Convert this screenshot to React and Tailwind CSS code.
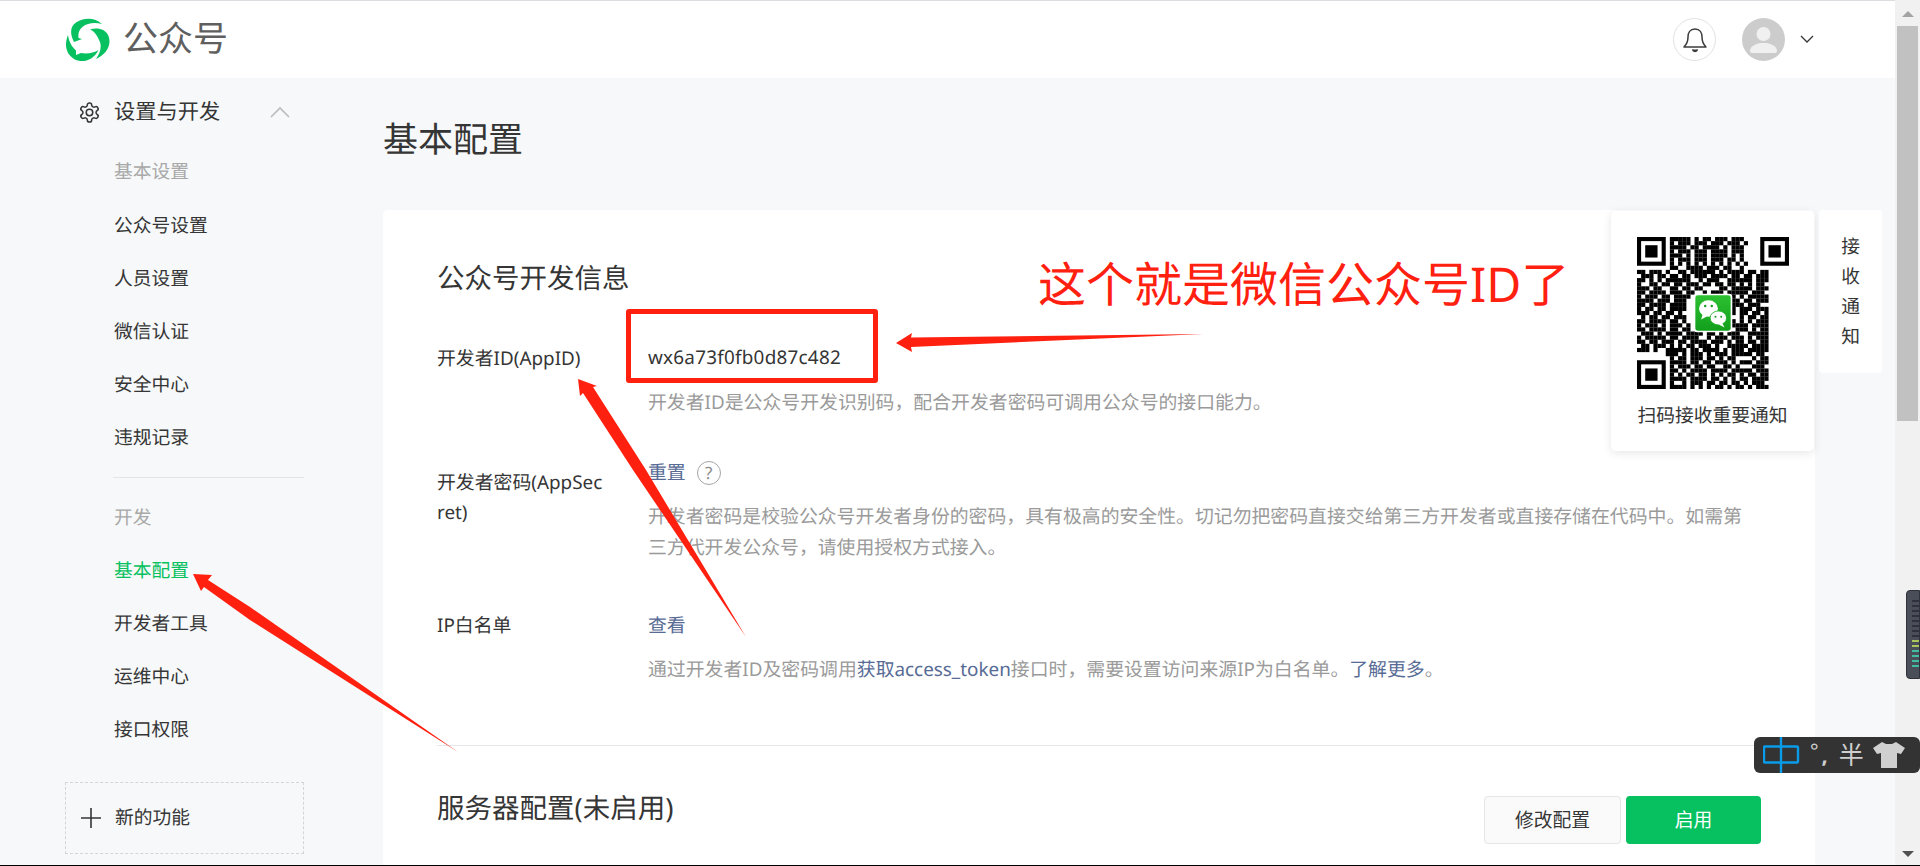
import React from "react";

const font = { fontFamily: '"Noto Sans", "Noto Sans CJK SC", sans-serif' };

const qrRows = [
  "..... ...## ###.# .##.# ##.## #.... ..",
  "..... ...#. ###.# ##.## #.### .#... ..",
  "..... ...## ##.## .#### .#.## #.... ..",
  "..... ...#. ###.# ##.## ##.## #.... ..",
  "..... ...## #.#.# ##.## ##.#. #.... ..",
  "..... ...#. ###.# ##.## #.##. #.... ..",
  "..... ...#. #.#.# .#.#. #.#.# .#... ..",
  "..... ...## ..### #.### .##.. #.... ..",
  "##.## #.#.. ##.## ####. #.### #.##. ##",
  ".###. ##.## .##.# ##.## ##.## .##.# ##",
  "##.#. #.### ###.. #.### ..### ###.# ##",
  "#..## .##.# #.### .##.# #.##. #.#.# #.",
  "###.# #..## .##.# #.... ##.## ###.# ##",
  "##.## ##.## #.##. .#.## #.### ##.## #.",
  "#.### .##.# ###.. ....# #.##. #.### ##",
  "####. ###.# ##... ..... .#.## .##.# ##",
  "##.## ##.## ##... ..... ##.## #.### ..",
  "#.##. ##.## ##... ..... ####. ###.# ##",
  "###.# #.##. #.... ..... ##.#. ##.## .#",
  ".#.## .##.# ##... ..... ###.. #.##. ##",
  "##.## ##.## .#... ..... .###. #.#.# ##",
  "#.### .#.## #.#.. ...#. ##.## ##.## ##",
  "##.## ##.## .##.# #.#.# ###.# ##.#. ##",
  ".###. #.### #.### #.##. #.### ..### ##",
  "#.### ##.## .#### ..#.# ##.## #.#.# ##",
  "##.## .###. ##.## ##.## #.#.# #.##. ##",
  ".##.# ##.#. #.##. ###.# ..### ##.## ##",
  "###.# ..### ##.## .#### .#.## #.### ##",
  "..... ..### .#.## #.#.# ##.## ###.# #.",
  "..... ...#. ##.## #.##. #.##. ...#. ##",
  "..... ...## ##.## .##.# ##.#. ###.# ##",
  "..... ...#. ###.# #.##. .##.# ...## #.",
  "..... ...## .#.## ##.## ##.## ###.# ##",
  "..... ...#. #.##. ##.#. #.##. #.##. ##",
  "..... ...## ##.## ##.## .#.#. ##.## ##",
  "..... ...#. .#.## #.##. ##.## .#.## #.",
  "..... ...## ##.#. #.#.# #.#.# #.#.# ##",
];

function QrCode() {
  const finder = (x, y) => (
    <g key={`${x}-${y}`}>
      <rect x={x} y={y} width="7" height="7" fill="#000" />
      <rect x={x + 1} y={y + 1} width="5" height="5" fill="#fff" />
      <rect x={x + 2} y={y + 2} width="3" height="3" fill="#000" />
    </g>
  );
  return (
    <svg width="152" height="152" viewBox="0 0 37 37" className="block">
      {qrRows.map((row, y) =>
        row.replace(/\s/g, "").split("").map((c, x) =>
          c === "#" ? <rect key={`${x}-${y}`} x={x} y={y} width="1.02" height="1.02" fill="#000" /> : null
        )
      )}
      {finder(0, 0)}
      {finder(30, 0)}
      {finder(0, 30)}
      <defs>
        <linearGradient id="wxg" x1="0" y1="0" x2="0" y2="1">
          <stop offset="0" stopColor="#2dc131" />
          <stop offset="1" stopColor="#129f1d" />
        </linearGradient>
      </defs>
      <rect x="13.8" y="13.8" width="9.4" height="9.4" rx="0.8" fill="#fff" />
      <rect x="14.2" y="14.2" width="8.6" height="8.6" rx="0.6" fill="url(#wxg)" />
      <ellipse cx="17.4" cy="17.4" rx="2.3" ry="2" fill="#fff" />
      <path d="M16 18.8l-.4 1.3 1.5-.8z" fill="#fff" />
      <ellipse cx="19.8" cy="19.7" rx="2" ry="1.7" fill="#fff" stroke="#1fb027" strokeWidth="0.2" />
      <path d="M20.8 21l.5 1-1.4-.7z" fill="#fff" />
      <circle cx="16.6" cy="16.8" r="0.3" fill="#1a9f22" />
      <circle cx="18.2" cy="16.8" r="0.3" fill="#1a9f22" />
      <circle cx="19.1" cy="19.4" r="0.25" fill="#1a9f22" />
      <circle cx="20.5" cy="19.4" r="0.25" fill="#1a9f22" />
    </svg>
  );
}

function Logo() {
  return (
    <svg width="45" height="44" viewBox="0 0 45 44" className="block shrink-0" fill="#07c160">
      <path d="M9 24C4 14 6 8 11 4.500 18-.5 30-1 37 6c-7-2-15-1-19 2.500-4 3-5 6.500-4.500 11.500l3.500 1z" />
      <path d="M25 11.500c7-2.500 16-.5 18.500 6.500 3.500 9-2.500 19-12.500 23 5-7 6-14 3-19-2-5-5-9-9-10.500z" />
      <path d="M3 17c-4 10-2 19 6 24 8 4.500 19 2 24.500-9-4.500 3-11.500 4-17.500 3l-5 2v-4.500C7 29 4 24 3 17z" />
    </svg>
  );
}

function SideItem({ children, muted, active }) {
  return (
    <div className={`h-[53.1px] flex items-center pl-[114px] text-[18.75px] ${muted ? "text-[#a8a8a8]" : active ? "text-[#07c160]" : "text-[#353535]"}`}>
      {children}
    </div>
  );
}

function Sidebar() {
  return (
    <aside className="w-[383px] shrink-0">
      <div className="h-[68px] flex items-center pl-[78px]">
        <svg width="23" height="23" viewBox="0 0 24 24" fill="none" stroke="#353535" strokeWidth="1.6" strokeLinecap="round" strokeLinejoin="round">
          <path d="M12.22 2h-.44a2 2 0 0 0-2 2v.18a2 2 0 0 1-1 1.73l-.43.25a2 2 0 0 1-2 0l-.15-.08a2 2 0 0 0-2.73.73l-.22.38a2 2 0 0 0 .73 2.73l.15.1a2 2 0 0 1 1 1.72v.51a2 2 0 0 1-1 1.74l-.15.09a2 2 0 0 0-.73 2.73l.22.38a2 2 0 0 0 2.73.73l.15-.08a2 2 0 0 1 2 0l.43.25a2 2 0 0 1 1 1.73V20a2 2 0 0 0 2 2h.44a2 2 0 0 0 2-2v-.18a2 2 0 0 1 1-1.73l.43-.25a2 2 0 0 1 2 0l.15.08a2 2 0 0 0 2.73-.73l.22-.39a2 2 0 0 0-.73-2.73l-.15-.08a2 2 0 0 1-1-1.74v-.5a2 2 0 0 1 1-1.74l.15-.09a2 2 0 0 0 .73-2.73l-.22-.38a2 2 0 0 0-2.73-.73l-.15.08a2 2 0 0 1-2 0l-.43-.25a2 2 0 0 1-1-1.73V4a2 2 0 0 0-2-2z" />
          <circle cx="12" cy="12" r="3.4" />
        </svg>
        <span className="ml-[13px] text-[21.25px] text-[#353535]">设置与开发</span>
        <svg width="20" height="12" viewBox="0 0 20 12" fill="none" stroke="#bcbcbc" strokeWidth="1.6" className="ml-[50px]">
          <path d="M1 11l9-9 9 9" />
        </svg>
      </div>
      <SideItem muted>基本设置</SideItem>
      <SideItem>公众号设置</SideItem>
      <SideItem>人员设置</SideItem>
      <SideItem>微信认证</SideItem>
      <SideItem>安全中心</SideItem>
      <SideItem>违规记录</SideItem>
      <div className="ml-[113px] w-[191px] h-px bg-[#e4e5e7] mt-[12.4px] mb-[13.6px]" />
      <SideItem muted>开发</SideItem>
      <SideItem active>基本配置</SideItem>
      <SideItem>开发者工具</SideItem>
      <SideItem>运维中心</SideItem>
      <SideItem>接口权限</SideItem>
      <div className="ml-[65px] mt-[25px] w-[239px] h-[72px] border-[1.5px] border-dashed border-[#d4d5d7] flex items-center pl-[14px]">
        <svg width="22" height="22" viewBox="0 0 22 22" stroke="#353535" strokeWidth="1.6">
          <path d="M11 1v20M1 11h20" />
        </svg>
        <span className="ml-[13px] text-[18.75px] text-[#353535]">新的功能</span>
      </div>
    </aside>
  );
}

function Row({ label, labelClass = "", children }) {
  return (
    <div className="flex text-[18.88px] leading-[31px]">
      <div className={`w-[211px] shrink-0 text-[#353535] ${labelClass}`}>{label}</div>
      <div className="flex-1">{children}</div>
    </div>
  );
}

function Main() {
  return (
    <main className="flex-1 min-w-0 flex flex-col">
      <h1 className="shrink-0 pt-[38px] h-[132px] text-[35px] leading-[48px] font-normal text-[#353535]">基本配置</h1>
      <section className="flex-1 w-[1432px] bg-white rounded-t-[5px] pl-[54px] pr-[54px] pt-[49px]">
        <h2 className="text-[27.5px] leading-[40px] font-normal text-[#353535] mb-[43px]">公众号开发信息</h2>
        <Row label="开发者ID(AppID)" labelClass="mt-[1px]">
          <div className="text-[#353535] tracking-[0.25px]">wx6a73f0fb0d87c482</div>
          <p className="mt-[14px] text-[#9a9a9a]">开发者ID是公众号开发识别码，配合开发者密码可调用公众号的接口能力。</p>
        </Row>
        <div className="mt-[39px]">
          <Row label={<>开发者密码(AppSec<br />ret)</>} labelClass="mt-[10px] leading-[30px]">
            <div className="flex items-center h-[31px] text-[#576b95]">
              <span>重置</span>
              <span className="ml-[11px] w-[24px] h-[24px] rounded-full border border-[#a5a5a5] flex items-center justify-center text-[#8c8c8c] text-[17px] leading-none">?</span>
            </div>
            <p className="mt-[13px] text-[#9a9a9a]">开发者密码是校验公众号开发者身份的密码，具有极高的安全性。切记勿把密码直接交给第三方开发者或直接存储在代码中。如需第<br />三方代开发公众号，请使用授权方式接入。</p>
          </Row>
        </div>
        <div className="mt-[47px]">
          <Row label="IP白名单">
            <div className="text-[#576b95]">查看</div>
            <p className="mt-[13px] text-[#9a9a9a]">
              通过开发者ID及密码调用<span className="text-[#576b95]">获取access_token</span>接口时，需要设置访问来源IP为白名单。<span className="text-[#576b95]">了解更多</span>。
            </p>
          </Row>
        </div>
        <div className="mt-[60px] h-px bg-[#e7e7eb]" />
        <div className="mt-[50px] flex items-start justify-between">
          <h2 className="text-[27.5px] leading-[40px] mt-[-7px] font-normal text-[#353535]">服务器配置(未启用)</h2>
          <div className="flex gap-[5px]">
            <button className="w-[137px] h-[48px] bg-[#fafafa] border border-[#e5e5e5] rounded-[4px] text-[18.75px] text-[#353535]">修改配置</button>
            <button className="w-[135px] h-[48px] bg-[#07c160] rounded-[4px] text-[18.75px] text-white">启用</button>
          </div>
        </div>
      </section>
    </main>
  );
}

function NoticeCards() {
  return (
    <>
      <div className="absolute left-[1611px] top-[211px] w-[203px] h-[240px] bg-white rounded-[5px] shadow-[0_2px_10px_rgba(0,0,0,0.1)] flex flex-col items-center pt-[26px]">
        <QrCode />
        <div className="mt-[14px] text-[18.75px] leading-[26px] text-[#353535]">扫码接收重要通知</div>
      </div>
      <div className="absolute left-[1819px] top-[210px] w-[63px] h-[163px] bg-white rounded-[4px] flex flex-col items-center pt-[22px] text-[18.75px] leading-[30px] text-[#353535]">
        <span>接</span>
        <span>收</span>
        <span>通</span>
        <span>知</span>
      </div>
    </>
  );
}

// red annotations drawn over the page
function Annotations() {
  return (
    <>
      <div className="absolute left-[626px] top-[309px] w-[252px] h-[74px] border-[5px] border-[#ff2010] rounded-[3px]" />
      <div className="absolute left-[1038px] top-[255px] text-[48px] leading-[60px] text-[#ff2010] whitespace-nowrap">这个就是微信公众号ID了</div>
      <svg className="absolute left-0 top-0 pointer-events-none" width="1920" height="866" fill="#ff2010">
        <polygon points="896,343 912,333 911,337.5 1203,334 911,347 912,352" />
        <polygon points="578,379 597,386 593,387 646,470 746,637 633,470 583,393 580,396" />
        <polygon points="193,574 212,575 208,580 250,607 458,752 250,620 204,587 201,591" />
      </svg>
    </>
  );
}

function ImeBar() {
  return (
    <div className="absolute left-[1754px] top-[737px] w-[166px] h-[36px] bg-[#333333] rounded-[6px] flex items-center text-[#cfcfcf]">
      <svg width="38" height="36" viewBox="0 0 38 36" className="ml-[9px] shrink-0" fill="none" stroke="#0a9ce8" strokeWidth="2.4">
        <rect x="1" y="9.5" width="34" height="16" rx="1" />
        <path d="M18 0v36" />
      </svg>
      <span className="ml-[9px] text-[20px] leading-none -mt-[8px]">°</span>
      <span className="ml-[3px] text-[22px] leading-none font-bold">,</span>
      <span className="ml-[11px] text-[25px] leading-none">半</span>
      <svg width="32" height="26" viewBox="0 0 32 26" className="ml-[9px] shrink-0" fill="#d0d0d0">
        <path d="M9 0l4 2h6l4-2 9 6-4 6-4-1v15H8V11l-4 1L0 6z" />
      </svg>
    </div>
  );
}

function Scrollbar() {
  return (
    <div className="w-[25px] shrink-0 bg-[#f1f1f1] flex flex-col items-center relative">
      <div className="h-[26px] w-full flex items-center justify-center">
        <div className="w-0 h-0 border-x-[6px] border-x-transparent border-b-[6px] border-b-[#a3a3a3] mt-[2px]" />
      </div>
      <div className="w-[21px] h-[395px] bg-[#c1c1c1]" />
      <div className="mt-auto h-[24px] w-full flex items-center justify-center">
        <div className="w-0 h-0 border-x-[6px] border-x-transparent border-t-[6px] border-t-[#505050]" />
      </div>
    </div>
  );
}

function Meter() {
  const ticks = Array.from({ length: 14 }, (_, i) => i);
  return (
    <div className="absolute left-[1906px] top-[590px] w-[14px] h-[89px] bg-[#4a4e59] rounded-l-[4px] border border-[#2f323a] pt-[9px] pl-[5px]">
      {ticks.map((i) => (
        <div
          key={i}
          className={`w-[7px] h-[2px] mb-[3px] ${i < 8 ? "bg-[#2f323a]" : i < 10 ? "bg-[#a9c75a]" : "bg-[#3fbf9f]"}`}
        />
      ))}
    </div>
  );
}

export default function App() {
  return (
    <div className="relative w-[1920px] h-[866px] overflow-hidden bg-[#f6f8f9] flex [text-rendering:geometricPrecision]" style={font}>
      <div className="w-[1895px] shrink-0 flex flex-col">
        <header className="h-[78px] shrink-0 bg-white border-t border-[#dcdde1] flex items-center pl-[65px]">
          <Logo />
          <span className="ml-[13px] text-[35px] text-[#5f5f5f]">公众号</span>
          <div className="ml-auto flex items-center pr-[81px]">
            <div className="w-[43px] h-[43px] rounded-full border border-[#e2e2e2] flex items-center justify-center">
              <svg width="24" height="26" viewBox="0 0 24 26" fill="none" stroke="#3c3c3c" strokeWidth="1.5" strokeLinejoin="round">
                <path d="M12 2c-5 0-7 4-7 8 0 5-2 8-4 10h22c-2-2-4-5-4-10 0-4-2-8-7-8z" />
                <path d="M9.500 22.500a2.600 2.600 0 005 0" fill="#3c3c3c" />
              </svg>
            </div>
            <div className="ml-[26px] w-[43px] h-[43px] rounded-full bg-[#cccccc] flex items-center justify-center overflow-hidden">
              <svg width="27" height="27" viewBox="0 0 27 27" fill="#f0f0f0">
                <circle cx="13.5" cy="8" r="7" />
                <path d="M0 25c0-5 6-7 10-8h7c4 1 10 3 10 8 0 1-1 2-2 2H2c-1 0-2-1-2-2z" />
              </svg>
            </div>
            <svg width="14" height="9" viewBox="0 0 14 9" fill="none" stroke="#353535" strokeWidth="1.3" className="ml-[15px]">
              <path d="M1 1l6 6 6-6" />
            </svg>
          </div>
        </header>
        <div className="flex-1 flex min-h-0">
          <Sidebar />
          <Main />
        </div>
      </div>
      <Scrollbar />
      <NoticeCards />
      <Annotations />
      <ImeBar />
      <Meter />
      <div className="absolute left-0 bottom-0 w-full h-px bg-black" />
    </div>
  );
}
